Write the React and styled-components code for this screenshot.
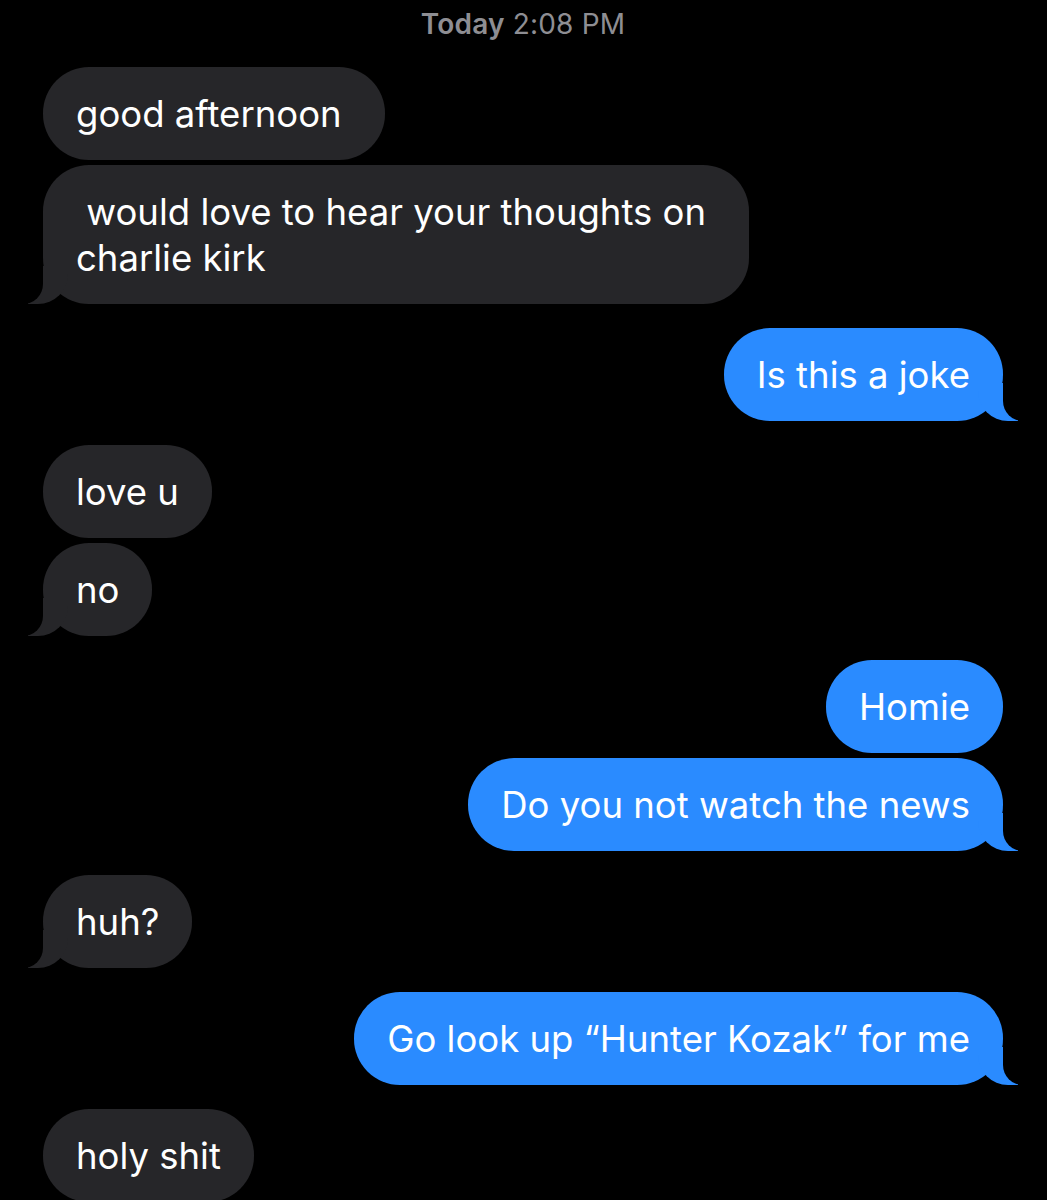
import React from 'react'
import styled, { createGlobalStyle, css } from 'styled-components'

const GlobalStyle = createGlobalStyle`
 html, body {
  margin: 0;
  padding: 0;
  background: #000;
 }
 body {
  font-family: Inter, "Liberation Sans", Arial, sans-serif;
  -webkit-font-smoothing: antialiased;
 }
`

const Thread = styled.div`
 display: flex;
 flex-direction: column;
 gap: 24px;
 padding: 6px 44px 0 43px;
 min-height: 1200px;
 background: #000;
 box-sizing: border-box;
 overflow: hidden;
`

const Stamp = styled.div`
 text-align: center;
 line-height: 36px;
 font-size: 28px;
 color: #8e8e93;
 letter-spacing: 0.2px;
 margin-bottom: 1px;

 b {
  font-weight: 600;
 }
`

const Group = styled.div`
 display: flex;
 flex-direction: column;
 align-items: ${(p) => (p.$mine ? 'flex-end' : 'flex-start')};
 gap: 5px;
`

const tailLeft = css`
 &::before {
  content: '';
  position: absolute;
  bottom: 0;
  left: -15px;
  width: 40px;
  height: 38px;
  background: #262629;
  border-bottom-right-radius: 30px;
 }
 &::after {
  content: '';
  position: absolute;
  bottom: 0;
  left: -20px;
  width: 20px;
  height: 40px;
  background: #000;
  border-bottom-right-radius: 20px;
 }
`

const tailRight = css`
 &::before {
  content: '';
  position: absolute;
  bottom: 0;
  right: -15px;
  width: 40px;
  height: 38px;
  background: #2a8bff;
  border-bottom-left-radius: 30px;
 }
 &::after {
  content: '';
  position: absolute;
  bottom: 0;
  right: -20px;
  width: 20px;
  height: 40px;
  background: #000;
  border-bottom-left-radius: 20px;
 }
`

const Bubble = styled.div`
 position: relative;
 box-sizing: border-box;
 padding: 23.5px 33px;
 border-radius: 46px;
 font-size: 36.5px;
 line-height: 46px;
 color: #fff;
 white-space: pre;
 background: ${(p) => (p.$mine ? '#2a8bff' : '#262629')};
 ${(p) => p.$tail && (p.$mine ? tailRight : tailLeft)}

 span {
  position: relative;
  z-index: 1;
 }
`

const messages = [
 { mine: false, lines: ['good afternoon\u00a0', '\u00a0would love to hear your thoughts on\u00a0\ncharlie kirk'] },
 { mine: true, lines: ['Is this a joke'] },
 { mine: false, lines: ['love u', 'no'] },
 { mine: true, lines: ['Homie', 'Do you not watch the news'] },
 { mine: false, lines: ['huh?'] },
 { mine: true, lines: ['Go look up \u201cHunter Kozak\u201d for me'] },
 { mine: false, lines: ['holy shit'], open: true },
]

export default function App() {
 return (
  <>
   <GlobalStyle />
   <Thread>
    <Stamp>
     <b>Today</b> 2:08 PM
    </Stamp>
    {messages.map((group, i) => (
     <Group key={i} $mine={group.mine}>
      {group.lines.map((text, j) => (
       <Bubble
        key={j}
        $mine={group.mine}
        $tail={!group.open && j === group.lines.length - 1}
       >
        <span>{text}</span>
       </Bubble>
      ))}
     </Group>
    ))}
   </Thread>
  </>
 )
}
